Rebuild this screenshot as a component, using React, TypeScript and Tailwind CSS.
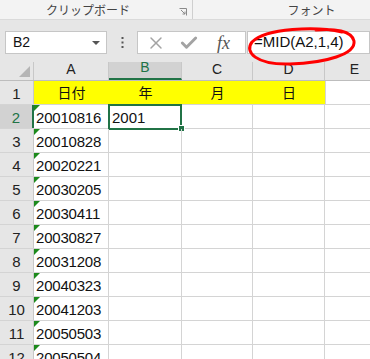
import { X, Check } from 'lucide-react';

const dates = [
  '20010816',
  '20010828',
  '20020221',
  '20030205',
  '20030411',
  '20030827',
  '20031208',
  '20040323',
  '20041203',
  '20050503',
  '20050504',
];

const cols = [
  { key: 'A', w: 'w-[75px]' },
  { key: 'B', w: 'w-[73px]' },
  { key: 'C', w: 'w-[71px]' },
  { key: 'D', w: 'w-[72px]' },
  { key: 'E', w: 'w-[60px]' },
];

function ErrorMark() {
  return (
    <div className="absolute top-0 left-0 w-0 h-0 border-t-[6px] border-r-[6px] border-t-[#1c8a1c] border-r-transparent" />
  );
}

export default function App() {
  const header = ['日付', '年', '月', '日'];

  return (
    <div className="relative w-[370px] h-[359px] overflow-hidden bg-white font-['Liberation_Sans','Noto_Sans_CJK_JP',sans-serif] text-[#111]">
      {/* Ribbon group labels */}
      <div className="flex h-[20px] bg-[#f3f3f3] border-b border-[#dadada] font-['Noto_Sans_CJK_JP',sans-serif] text-[12px] text-[#444]">
        <div className="relative flex w-[192px] shrink-0 items-center justify-center">
          <span className="-ml-[16px]">クリップボード</span>
          <svg className="absolute right-[5px] top-[8px]" width="8" height="8" viewBox="0 0 8 8">
            <path d="M0.5 0.5 H7.5 V7.5" fill="none" stroke="#8a8a8a" />
            <path d="M2 2 L6 6 M6 3.5 V6 H3.5" fill="none" stroke="#8a8a8a" />
          </svg>
        </div>
        <div className="w-px shrink-0 bg-[#cfcfcf]" />
        <div className="flex flex-1 items-center justify-center pl-[60px]">フォント</div>
      </div>

      {/* Formula bar */}
      <div className="flex h-[42px] items-start bg-[#e6e6e6] pt-[11px]">
        <div className="ml-[5px] flex h-[23px] w-[102px] shrink-0 items-center justify-between border border-[#c6c6c6] bg-white pl-[7px] pr-[6px] text-[14px]">
          <span>B2</span>
          <span className="h-0 w-0 border-x-[4px] border-t-[4px] border-x-transparent border-t-[#555]" />
        </div>
        <div className="flex h-[23px] w-[30px] shrink-0 items-center justify-center text-[#555]">
          <svg width="3" height="11" viewBox="0 0 3 11">
            <rect x="0.5" y="0" width="2" height="2" fill="#555" />
            <rect x="0.5" y="4.5" width="2" height="2" fill="#555" />
            <rect x="0.5" y="9" width="2" height="2" fill="#555" />
          </svg>
        </div>
        <div className="flex h-[23px] w-[109px] shrink-0 items-center border border-[#c6c6c6] bg-white">
          <X className="ml-[8px] text-[#a3a3a3]" size={20} strokeWidth={1.75} />
          <Check className="ml-[13px] text-[#a3a3a3]" size={20} strokeWidth={3.5} />
          <span className="ml-[18px] font-['Liberation_Serif',serif] text-[18px] italic leading-none text-[#555]">
            fx
          </span>
        </div>
        <div className="ml-[1px] flex h-[23px] flex-1 items-center border border-[#c6c6c6] bg-white pl-[6px] text-[15px]">
          =MID(A2,1,4)
        </div>
      </div>

      {/* Column headers */}
      <div className="flex h-[19px] bg-[#e6e6e6] border-b border-[#bdbdbd] text-[14px] text-[#222]">
        <div className="relative w-[34px] shrink-0 border-r border-[#c8c8c8]">
          <div className="absolute bottom-[3px] right-[3px] h-0 w-0 border-b-[11px] border-l-[11px] border-b-[#b5b5b5] border-l-transparent" />
        </div>
        {cols.map((c) => (
          <div
            key={c.key}
            className={`${c.w} flex shrink-0 items-end justify-center border-r border-[#c8c8c8] ${
              c.key === 'B' ? 'bg-[#d2d2d2] text-[#217346] border-b-2 border-b-[#217346]' : ''
            }`}
          >
            {c.key}
          </div>
        ))}
      </div>

      {/* Row 1 */}
      <div className="flex h-[24px] border-b border-[#d4d4d4] font-['Noto_Sans_CJK_JP',sans-serif] text-[14px]">
        <div className="flex w-[34px] shrink-0 items-end justify-center bg-[#e6e6e6] border-r border-[#c8c8c8] font-['Liberation_Sans',sans-serif] text-[15px] leading-[20px] text-[#222]">
          1
        </div>
        {header.map((h, i) => (
          <div
            key={h}
            className={`${cols[i].w} flex shrink-0 items-center justify-center bg-[#ffff00]`}
          >
            {h}
          </div>
        ))}
        <div className="w-[60px] shrink-0 border-l border-[#d4d4d4]" />
      </div>

      {/* Data rows */}
      {dates.map((d, idx) => {
        const row = idx + 2;
        const sel = row === 2;
        return (
          <div key={d} className="flex h-[24px] border-b border-[#d4d4d4] text-[15px] leading-[20px]">
            <div
              className={`flex w-[34px] shrink-0 items-end justify-center border-r ${
                sel
                  ? 'bg-[#d2d2d2] text-[#217346] border-r-2 border-r-[#217346]'
                  : 'bg-[#e6e6e6] text-[#222] border-[#c8c8c8]'
              }`}
            >
              {row}
            </div>
            <div className="relative flex w-[75px] shrink-0 items-end border-r border-[#d4d4d4] pl-[2px]">
              <ErrorMark />
              <span className="tracking-[-0.2px]">{d}</span>
            </div>
            <div className="relative flex w-[73px] shrink-0 items-end border-r border-[#d4d4d4] pl-[3px]">
              {sel && (
                <>
                  2001
                  <div className="absolute -left-[1px] -top-[1px] h-[26px] w-[74px] border-2 border-[#217346]" />
                  <div className="absolute -bottom-[4px] -right-[4px] h-[7px] w-[7px] border border-white bg-[#217346]" />
                </>
              )}
            </div>
            <div className="w-[71px] shrink-0 border-r border-[#d4d4d4]" />
            <div className="w-[72px] shrink-0 border-r border-[#d4d4d4]" />
            <div className="w-[60px] shrink-0" />
          </div>
        );
      })}

      {/* Red hand-drawn circle */}
      <svg className="absolute left-[244px] top-[25px]" width="118" height="42" viewBox="0 0 118 42">
        <path
          d="M98 7 C72 1, 22 3, 8 17 C0 27, 12 40, 46 39 C82 38, 112 29, 110 16 C108 6, 90 3, 72 5"
          fill="none"
          stroke="#ff0000"
          strokeWidth="3"
          strokeLinecap="round"
        />
      </svg>
    </div>
  );
}
